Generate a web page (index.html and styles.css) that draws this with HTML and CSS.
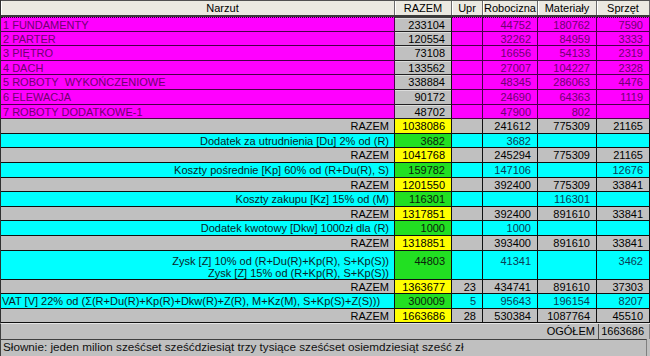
FILE: index.html
```html
<!DOCTYPE html>
<html lang="pl">
<head>
<meta charset="utf-8">
<title>Narzut</title>
<link rel="stylesheet" href="styles.css">
</head>
<body>
<div class="win">
  <div class="grid">
    <div class="row head">
      <div class="hc narzut">Narzut</div>
      <div class="hc">RAZEM</div>
      <div class="hc">Upr</div>
      <div class="hc">Robocizna</div>
      <div class="hc">Materiały</div>
      <div class="hc">Sprzęt</div>
    </div>

    <div class="row m first">
      <div class="c lbl">1 FUNDAMENTY</div>
      <div class="c n g">233104</div>
      <div class="c n"></div>
      <div class="c n">44752</div>
      <div class="c n">180762</div>
      <div class="c n">7590</div>
    </div>
    <div class="row m">
      <div class="c lbl">2 PARTER</div>
      <div class="c n g">120554</div>
      <div class="c n"></div>
      <div class="c n">32262</div>
      <div class="c n">84959</div>
      <div class="c n">3333</div>
    </div>
    <div class="row m">
      <div class="c lbl">3 PIĘTRO</div>
      <div class="c n g">73108</div>
      <div class="c n"></div>
      <div class="c n">16656</div>
      <div class="c n">54133</div>
      <div class="c n">2319</div>
    </div>
    <div class="row m">
      <div class="c lbl">4 DACH</div>
      <div class="c n g">133562</div>
      <div class="c n"></div>
      <div class="c n">27007</div>
      <div class="c n">104227</div>
      <div class="c n">2328</div>
    </div>
    <div class="row m">
      <div class="c lbl">5 ROBOTY&nbsp; WYKOŃCZENIOWE</div>
      <div class="c n g">338884</div>
      <div class="c n"></div>
      <div class="c n">48345</div>
      <div class="c n">286063</div>
      <div class="c n">4476</div>
    </div>
    <div class="row m">
      <div class="c lbl">6 ELEWACJA</div>
      <div class="c n g">90172</div>
      <div class="c n"></div>
      <div class="c n">24690</div>
      <div class="c n">64363</div>
      <div class="c n">1119</div>
    </div>
    <div class="row m">
      <div class="c lbl">7 ROBOTY DODATKOWE-1</div>
      <div class="c n g">48702</div>
      <div class="c n"></div>
      <div class="c n">47900</div>
      <div class="c n">802</div>
      <div class="c n"></div>
    </div>

    <div class="row s">
      <div class="c r">RAZEM</div>
      <div class="c n y">1038086</div>
      <div class="c n"></div>
      <div class="c n">241612</div>
      <div class="c n">775309</div>
      <div class="c n">21165</div>
    </div>
    <div class="row cy">
      <div class="c r">Dodatek za utrudnienia [Du] 2% od (R)</div>
      <div class="c n gr">3682</div>
      <div class="c n"></div>
      <div class="c n">3682</div>
      <div class="c n"></div>
      <div class="c n"></div>
    </div>
    <div class="row s">
      <div class="c r">RAZEM</div>
      <div class="c n y">1041768</div>
      <div class="c n"></div>
      <div class="c n">245294</div>
      <div class="c n">775309</div>
      <div class="c n">21165</div>
    </div>
    <div class="row cy">
      <div class="c r">Koszty pośrednie [Kp] 60% od (R+Du(R), S)</div>
      <div class="c n gr">159782</div>
      <div class="c n"></div>
      <div class="c n">147106</div>
      <div class="c n"></div>
      <div class="c n">12676</div>
    </div>
    <div class="row s">
      <div class="c r">RAZEM</div>
      <div class="c n y">1201550</div>
      <div class="c n"></div>
      <div class="c n">392400</div>
      <div class="c n">775309</div>
      <div class="c n">33841</div>
    </div>
    <div class="row cy">
      <div class="c r">Koszty zakupu [Kz] 15% od (M)</div>
      <div class="c n gr">116301</div>
      <div class="c n"></div>
      <div class="c n"></div>
      <div class="c n">116301</div>
      <div class="c n"></div>
    </div>
    <div class="row s">
      <div class="c r">RAZEM</div>
      <div class="c n y">1317851</div>
      <div class="c n"></div>
      <div class="c n">392400</div>
      <div class="c n">891610</div>
      <div class="c n">33841</div>
    </div>
    <div class="row cy">
      <div class="c r">Dodatek kwotowy [Dkw] 1000zł dla (R)</div>
      <div class="c n gr">1000</div>
      <div class="c n"></div>
      <div class="c n">1000</div>
      <div class="c n"></div>
      <div class="c n"></div>
    </div>
    <div class="row s">
      <div class="c r">RAZEM</div>
      <div class="c n y">1318851</div>
      <div class="c n"></div>
      <div class="c n">393400</div>
      <div class="c n">891610</div>
      <div class="c n">33841</div>
    </div>
    <div class="row cy tall">
      <div class="c r">Zysk [Z] 10% od (R+Du(R)+Kp(R), S+Kp(S))<br>Zysk [Z] 15% od (R+Kp(R), S+Kp(S))</div>
      <div class="c n gr">44803</div>
      <div class="c n"></div>
      <div class="c n">41341</div>
      <div class="c n"></div>
      <div class="c n">3462</div>
    </div>
    <div class="row s">
      <div class="c r">RAZEM</div>
      <div class="c n y">1363677</div>
      <div class="c n">23</div>
      <div class="c n">434741</div>
      <div class="c n">891610</div>
      <div class="c n">37303</div>
    </div>
    <div class="row cy">
      <div class="c vat">VAT [V] 22% od (Σ(R+Du(R)+Kp(R)+Dkw(R)+Z(R), M+Kz(M), S+Kp(S)+Z(S)))</div>
      <div class="c n gr">300009</div>
      <div class="c n">5</div>
      <div class="c n">95643</div>
      <div class="c n">196154</div>
      <div class="c n">8207</div>
    </div>
    <div class="row s">
      <div class="c r">RAZEM</div>
      <div class="c n y">1663686</div>
      <div class="c n">28</div>
      <div class="c n">530384</div>
      <div class="c n">1087764</div>
      <div class="c n">45510</div>
    </div>
  </div>

  <div class="total">
    <div class="total-label">OGÓŁEM</div>
    <div class="total-val">1663686</div>
  </div>
  <div class="words">Słownie: jeden milion sześćset sześćdziesiąt trzy tysiące sześćset osiemdziesiąt sześć zł</div>
</div>
</body>
</html>
```

FILE: styles.css
```css
* {
  box-sizing: border-box;
  margin: 0;
  padding: 0;
}

html,
body {
  width: 650px;
  height: 356px;
  overflow: hidden;
  background: #c0c0c0;
}

body {
  font-family: "Liberation Sans", Arial, sans-serif;
  font-size: 11px;
  color: #000;
}

.win {
  display: flex;
  flex-direction: column;
  width: 650px;
  height: 356px;
}

.grid {
  border-left: 1px solid #303030;
}

.row {
  display: grid;
  grid-template-columns: 394px 57px 31px 55px 59px 53px;
  height: 14.6px;
}

/* header */
.head {
  height: 17px;
  background: #ebe9e1;
  border-top: 1px solid #505050;
  border-bottom: 2px solid #3a3a3a;
}

.hc {
  text-align: center;
  line-height: 14px;
  border-right: 1px solid #6a6a6a;
  box-shadow: inset 1px 0 #ffffff;
  white-space: nowrap;
  overflow: hidden;
}

.hc.narzut {
  padding-left: 50px;
}

/* body cells */
.c {
  line-height: 14px;
  white-space: nowrap;
  overflow: hidden;
  border-right: 1px solid #101010;
  border-bottom: 1px solid #101010;
}

.n {
  text-align: right;
  padding-right: 6px;
}

.lbl {
  text-align: left;
  padding-left: 2px;
}

.r {
  text-align: right;
  padding-right: 5px;
}

.vat {
  text-align: left;
  padding-left: 1px;
}

/* magenta rows */
.m .c {
  background: #ff00ff;
  color: #700070;
  border-color: #4a004a;
}

.m .c.g {
  background: #c0c0c0;
  color: #000;
  border-bottom-color: #202020;
  border-right-color: #101010;
  box-shadow: inset 0 1px #dcdcdc;
}

.first .c {
  border-top: 1px dotted #300030;
}

.first .c.g {
  border-top: 1px solid #404040;
}

/* grey summary rows */
.s .c {
  background: #c0c0c0;
  color: #000;
}

.s .c.y {
  background: #ffff00;
}

/* cyan rows */
.cy .c {
  background: #00ffff;
  color: #0a3c55;
}

.cy .c.r,
.cy .c.vat {
  color: #0a1e28;
}

.cy .c.gr {
  background: #22e022;
  color: #0a200a;
}

.tall {
  height: 29.2px;
}

.tall .c {
  padding-top: 4px;
  line-height: 12px;
}

/* totals */
.total {
  display: flex;
  height: 16px;
  border-left: 1px solid #404040;
  border-top: 1px solid #e4e4e4;
  line-height: 14px;
}

.total-label {
  flex: 1;
  text-align: right;
  padding-right: 3px;
}

.total-val {
  width: 52px;
  text-align: right;
  padding-right: 5px;
  border-left: 1px solid #505050;
  border-right: 1px solid #808080;
}

.words {
  flex: 1;
  border-top: 1px solid #404040;
  border-left: 1px solid #404040;
  border-right: 1px solid #808080;
  margin-right: 3px;
  padding-left: 2px;
  font-size: 11.7px;
  line-height: 14px;
  white-space: nowrap;
  overflow: hidden;
  color: #101010;
}
```
